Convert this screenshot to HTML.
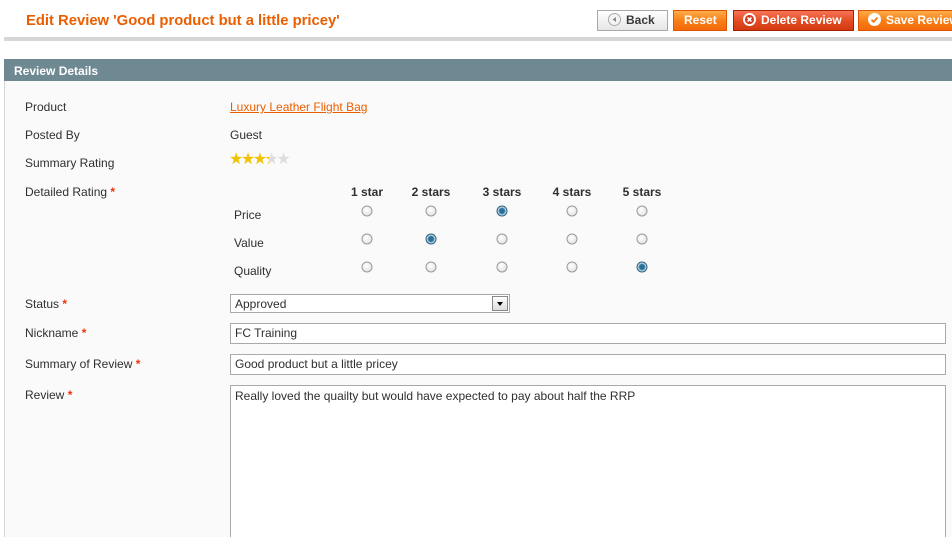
<!DOCTYPE html>
<html><head><style>
*{box-sizing:border-box;margin:0;padding:0}
html,body{width:952px;height:537px;overflow:hidden}
body{background:#fff;font-family:Arial,"Liberation Sans",sans-serif;font-size:12px;color:#2f2f2f;position:relative}
.abs{position:absolute}
h3{position:absolute;left:26px;top:13px;color:#eb5e00;font-size:14.8px;font-weight:bold;white-space:nowrap}
.btn{position:absolute;top:10px;height:21px;border:1px solid #de5400;background:linear-gradient(#fdac48,#f77c16 55%,#f46a0a);color:#fff;font-weight:bold;font-size:12px;line-height:19px;white-space:nowrap}
.bk{border-color:#a8a8a8;background:linear-gradient(#fff,#e6e6e6);color:#3a3a3a}
.del{border-color:#a92000;background:linear-gradient(#f77456,#e24a22 55%,#d2390f)}
.ic{display:inline-block;width:13px;height:13px;border-radius:50%;vertical-align:-2px;margin-right:5px;position:relative}
.line{left:4px;right:0;top:37px;height:4px;background:#d6d6d6}
.fs{left:4px;right:0;top:59px;height:478px;background:#fafafa;border-left:1px solid #d6d6d6}
.hd{left:4px;right:0;top:59px;height:22px;background:#6f8992;color:#fff;font-weight:bold;padding:5px 0 0 10px;font-size:12px}
.lb{position:absolute;left:25px;font-size:12px;color:#2f2f2f}
.req{color:#eb340a;font-weight:bold}
.val{position:absolute;left:230px}
.rh{position:absolute;top:185px;font-weight:bold;font-size:12px;color:#2f2f2f;transform:translateX(-50%);white-space:nowrap}
.rd{position:absolute;width:11px;height:11px;border-radius:50%;border:1px solid #9a9a9a;background:radial-gradient(circle at 40% 35%,#fff,#dcdcdc);transform:translate(-50%,-50%)}
.rd.on{border-color:#2a5d7c;background:radial-gradient(circle,#2c6e96 0 2.5px,#6aa3c4 3px,#e8f1f7 4.5px)}
.inp{position:absolute;left:230px;right:6px;border:1px solid #aaa;background:#fff;padding:2px 0 0 4px;font-size:12px;color:#2f2f2f}
</style></head><body>
<h3>Edit Review 'Good product but a little pricey'</h3>
<div class="btn bk" style="left:597px;width:71px;padding-left:10px"><span class="ic" style="border:1px solid #aaa;background:#f4f4f4"><svg width="11" height="11" style="position:absolute;left:0;top:0"><path d="M7 3 L3.5 5.5 L7 8Z" fill="#888"/></svg></span>Back</div>
<div class="btn" style="left:673px;width:54px;padding-left:10px">Reset</div>
<div class="btn del" style="left:733px;width:121px;padding-left:9px"><span class="ic" style="background:#fff"><svg width="13" height="13" style="position:absolute;left:0;top:0"><circle cx="6.5" cy="6.5" r="4.6" fill="#d73d1d"/><path d="M4.6 4.6 L8.4 8.4 M8.4 4.6 L4.6 8.4" stroke="#fff" stroke-width="1.6"/></svg></span>Delete Review</div>
<div class="btn" style="left:858px;width:100px;padding-left:9px"><span class="ic" style="background:#fff"><svg width="13" height="13" style="position:absolute;left:0;top:0"><path d="M3.5 6.8 L5.6 8.8 L9.5 4.5" stroke="#f47a16" stroke-width="1.8" fill="none"/></svg></span>Save Review</div>
<div class="abs line"></div>
<div class="abs fs"></div>
<div class="abs hd">Review Details</div>

<div class="lb" style="top:100px">Product</div>
<a class="val" style="top:100px;color:#eb5e00;text-decoration:underline">Luxury Leather Flight Bag</a>
<div class="lb" style="top:128px">Posted By</div>
<div class="val" style="top:128px">Guest</div>
<div class="lb" style="top:156px">Summary Rating</div>
<div class="val" style="top:149px;font-size:16px;letter-spacing:-2.5px;color:#ddd;left:229px"><span style="color:#f2c200">★★★</span><span style="background:linear-gradient(90deg,#f2c200 35%,#ddd 35%);-webkit-background-clip:text;color:transparent">★</span>★</div>
<div class="lb" style="top:185px">Detailed Rating <span class="req">*</span></div>
<div class="rh" style="left:367px">1 star</div>
<div class="rh" style="left:431px">2 stars</div>
<div class="rh" style="left:502px">3 stars</div>
<div class="rh" style="left:572px">4 stars</div>
<div class="rh" style="left:642px">5 stars</div>
<div class="abs" style="left:234px;top:208px">Price</div>
<div class="abs" style="left:234px;top:236px">Value</div>
<div class="abs" style="left:234px;top:264px">Quality</div>

<div class="rd" style="left:367px;top:211px"></div><div class="rd" style="left:431px;top:211px"></div><div class="rd on" style="left:502px;top:211px"></div><div class="rd" style="left:572px;top:211px"></div><div class="rd" style="left:642px;top:211px"></div>
<div class="rd" style="left:367px;top:239px"></div><div class="rd on" style="left:431px;top:239px"></div><div class="rd" style="left:502px;top:239px"></div><div class="rd" style="left:572px;top:239px"></div><div class="rd" style="left:642px;top:239px"></div>
<div class="rd" style="left:367px;top:267px"></div><div class="rd" style="left:431px;top:267px"></div><div class="rd" style="left:502px;top:267px"></div><div class="rd" style="left:572px;top:267px"></div><div class="rd on" style="left:642px;top:267px"></div>

<div class="lb" style="top:297px">Status <span class="req">*</span></div>
<div class="inp" style="top:294px;width:280px;right:auto;height:19px;padding-top:2px">Approved<div style="position:absolute;right:1px;top:1px;width:16px;height:15px;border:1px solid #888;background:linear-gradient(#fff,#ddd)"><svg width="14" height="13" style="position:absolute;left:0;top:0"><path d="M4 5 L10 5 L7 9Z" fill="#000"/></svg></div></div>
<div class="lb" style="top:326px">Nickname <span class="req">*</span></div>
<div class="inp" style="top:323px;height:21px">FC Training</div>
<div class="lb" style="top:357px">Summary of Review <span class="req">*</span></div>
<div class="inp" style="top:354px;height:21px">Good product but a little pricey</div>
<div class="lb" style="top:388px">Review <span class="req">*</span></div>
<div class="inp" style="top:385px;height:160px;padding-top:3px">Really loved the quailty but would have expected to pay about half the RRP</div>
</body></html>
